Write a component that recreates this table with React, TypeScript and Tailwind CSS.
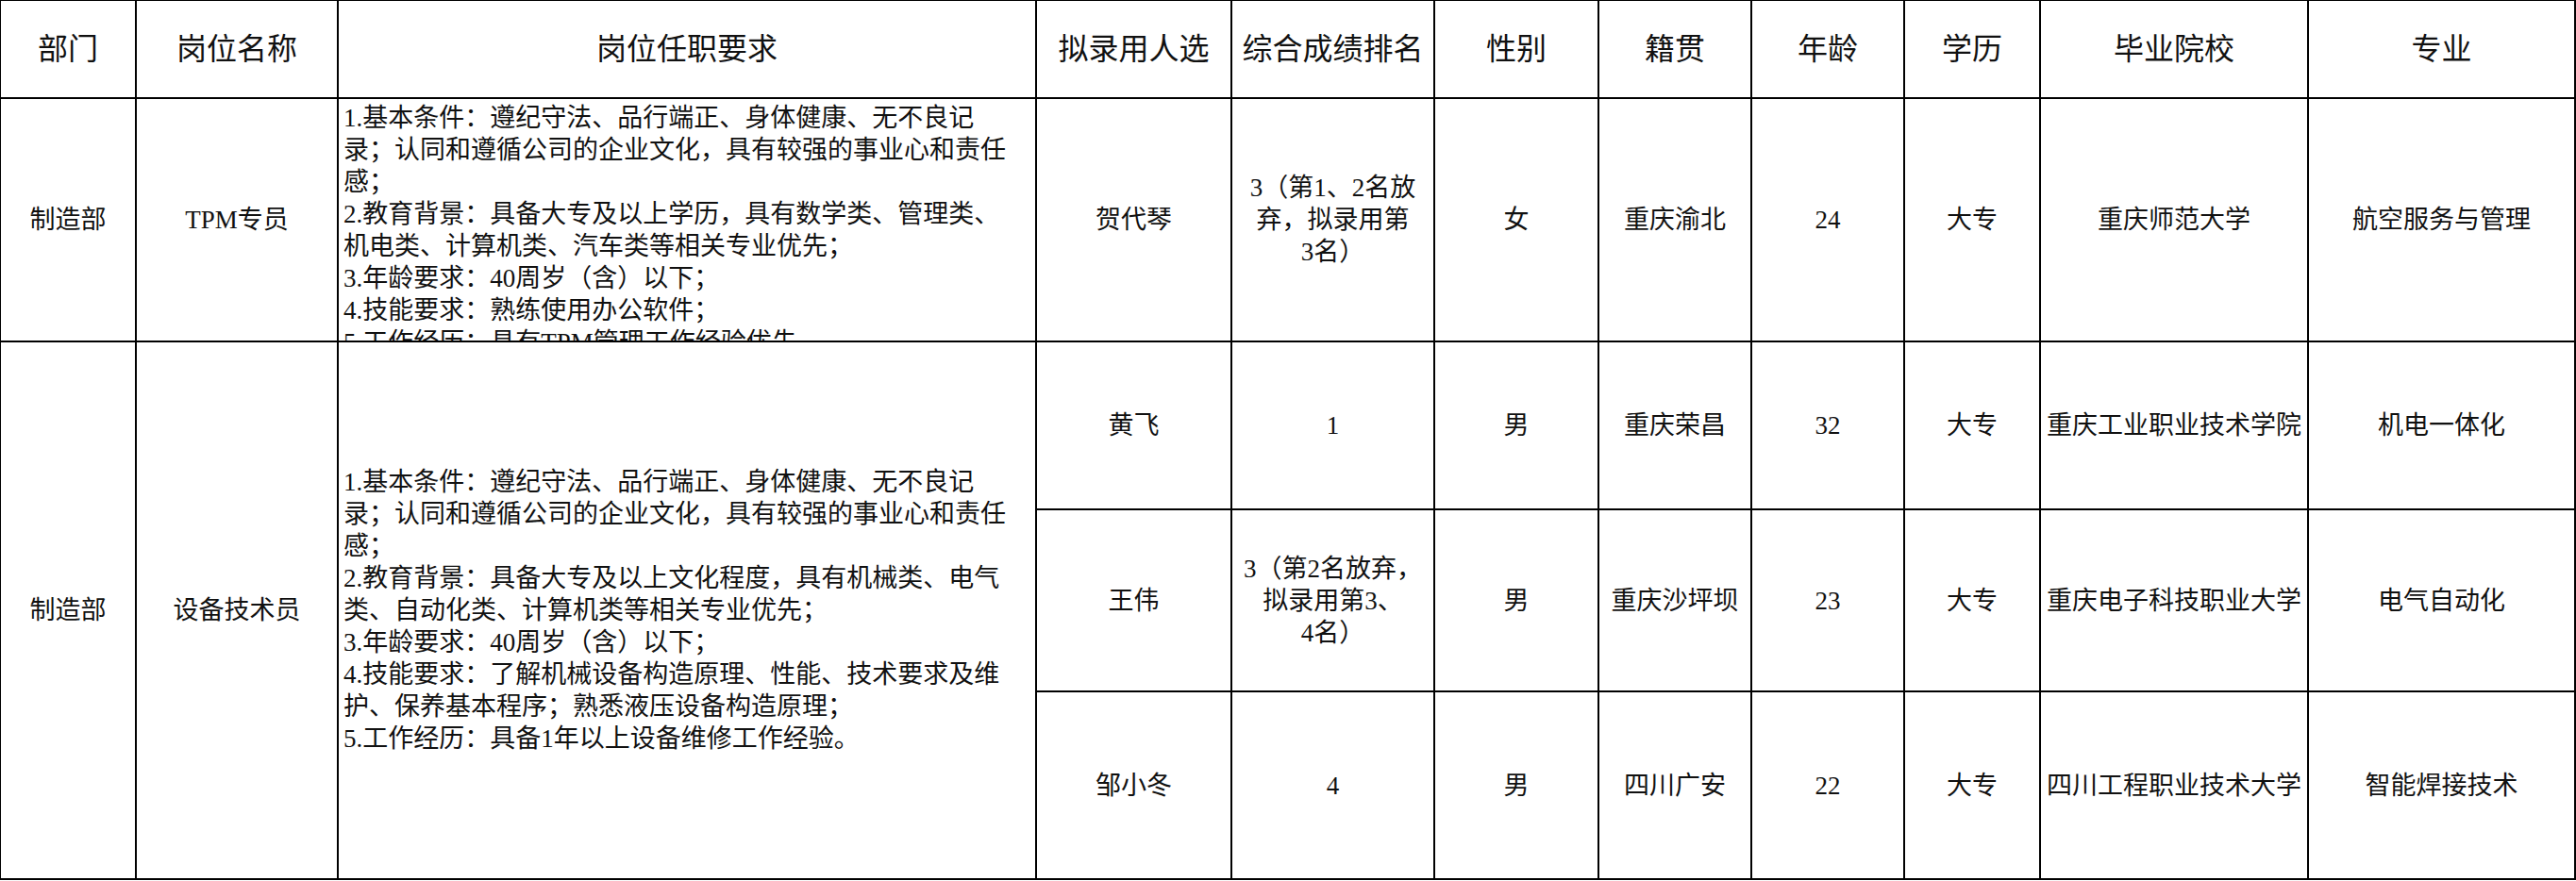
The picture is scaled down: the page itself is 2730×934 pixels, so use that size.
const font = "font-['Liberation_Serif','Noto_Sans_CJK_SC',serif]"

const headers = ['部门', '岗位名称', '岗位任职要求', '拟录用人选', '综合成绩排名', '性别', '籍贯', '年龄', '学历', '毕业院校', '专业']

const tpmReq = [
  '1.基本条件：遵纪守法、品行端正、身体健康、无不良记',
  '录；认同和遵循公司的企业文化，具有较强的事业心和责任',
  '感；',
  '2.教育背景：具备大专及以上学历，具有数学类、管理类、',
  '机电类、计算机类、汽车类等相关专业优先；',
  '3.年龄要求：40周岁（含）以下；',
  '4.技能要求：熟练使用办公软件；',
  '5.工作经历：具有TPM管理工作经验优先',
]

const techReq = [
  '1.基本条件：遵纪守法、品行端正、身体健康、无不良记',
  '录；认同和遵循公司的企业文化，具有较强的事业心和责任',
  '感；',
  '2.教育背景：具备大专及以上文化程度，具有机械类、电气',
  '类、自动化类、计算机类等相关专业优先；',
  '3.年龄要求：40周岁（含）以下；',
  '4.技能要求：了解机械设备构造原理、性能、技术要求及维',
  '护、保养基本程序；熟悉液压设备构造原理；',
  '5.工作经历：具备1年以上设备维修工作经验。',
]

type Person = {
  name: string
  rank: string[]
  gender: string
  origin: string
  age: string
  edu: string
  school: string
  major: string
}

const tpmPerson: Person = {
  name: '贺代琴',
  rank: ['3（第1、2名放', '弃，拟录用第', '3名）'],
  gender: '女',
  origin: '重庆渝北',
  age: '24',
  edu: '大专',
  school: '重庆师范大学',
  major: '航空服务与管理',
}

const techPeople: Person[] = [
  { name: '黄飞', rank: ['1'], gender: '男', origin: '重庆荣昌', age: '32', edu: '大专', school: '重庆工业职业技术学院', major: '机电一体化' },
  { name: '王伟', rank: ['3（第2名放弃，', '拟录用第3、', '4名）'], gender: '男', origin: '重庆沙坪坝', age: '23', edu: '大专', school: '重庆电子科技职业大学', major: '电气自动化' },
  { name: '邹小冬', rank: ['4'], gender: '男', origin: '四川广安', age: '22', edu: '大专', school: '四川工程职业技术大学', major: '智能焊接技术' },
]

function Cell({ children, className = '' }: { children?: React.ReactNode; className?: string }) {
  return (
    <div className={`flex items-center justify-center text-center border-r-2 border-b-2 border-black overflow-hidden ${className}`}>
      {children}
    </div>
  )
}

function Lines({ lines }: { lines: string[] }) {
  return (
    <div className="flex flex-col">
      {lines.map((l, i) => (
        <span key={i} className="whitespace-nowrap">{l}</span>
      ))}
    </div>
  )
}

function PersonCells({ p }: { p: Person }) {
  return (
    <>
      <Cell>{p.name}</Cell>
      <Cell><Lines lines={p.rank} /></Cell>
      <Cell>{p.gender}</Cell>
      <Cell>{p.origin}</Cell>
      <Cell>{p.age}</Cell>
      <Cell>{p.edu}</Cell>
      <Cell><span className="whitespace-nowrap">{p.school}</span></Cell>
      <Cell>{p.major}</Cell>
    </>
  )
}

export default function App() {
  return (
    <div className={`w-[2730px] h-[934px] bg-white text-[#111] ${font}`}>
      <div className="grid grid-cols-[144px_214px_740px_207px_215px_174px_162px_162px_144px_284px_283px] grid-rows-[104px_258px_178px_193px_199px] border-l border-t border-black text-[27px] leading-[34px]">
        {headers.map((h) => (
          <Cell key={h} className="text-[32px]">{h}</Cell>
        ))}

        <Cell>制造部</Cell>
        <Cell>TPM专员</Cell>
        {/* overflowing text is clipped at the row edge, as in the sheet */}
        <div className="flex items-start pt-[3px] pl-[5px] border-r-2 border-b-2 border-black overflow-hidden">
          <Lines lines={tpmReq} />
        </div>
        <PersonCells p={tpmPerson} />

        <Cell className="row-span-3">制造部</Cell>
        <Cell className="row-span-3">设备技术员</Cell>
        <div className="row-span-3 flex items-center pl-[5px] border-r-2 border-b-2 border-black overflow-hidden">
          <Lines lines={techReq} />
        </div>
        {techPeople.map((p) => (
          <PersonCells key={p.name} p={p} />
        ))}
      </div>
    </div>
  )
}
